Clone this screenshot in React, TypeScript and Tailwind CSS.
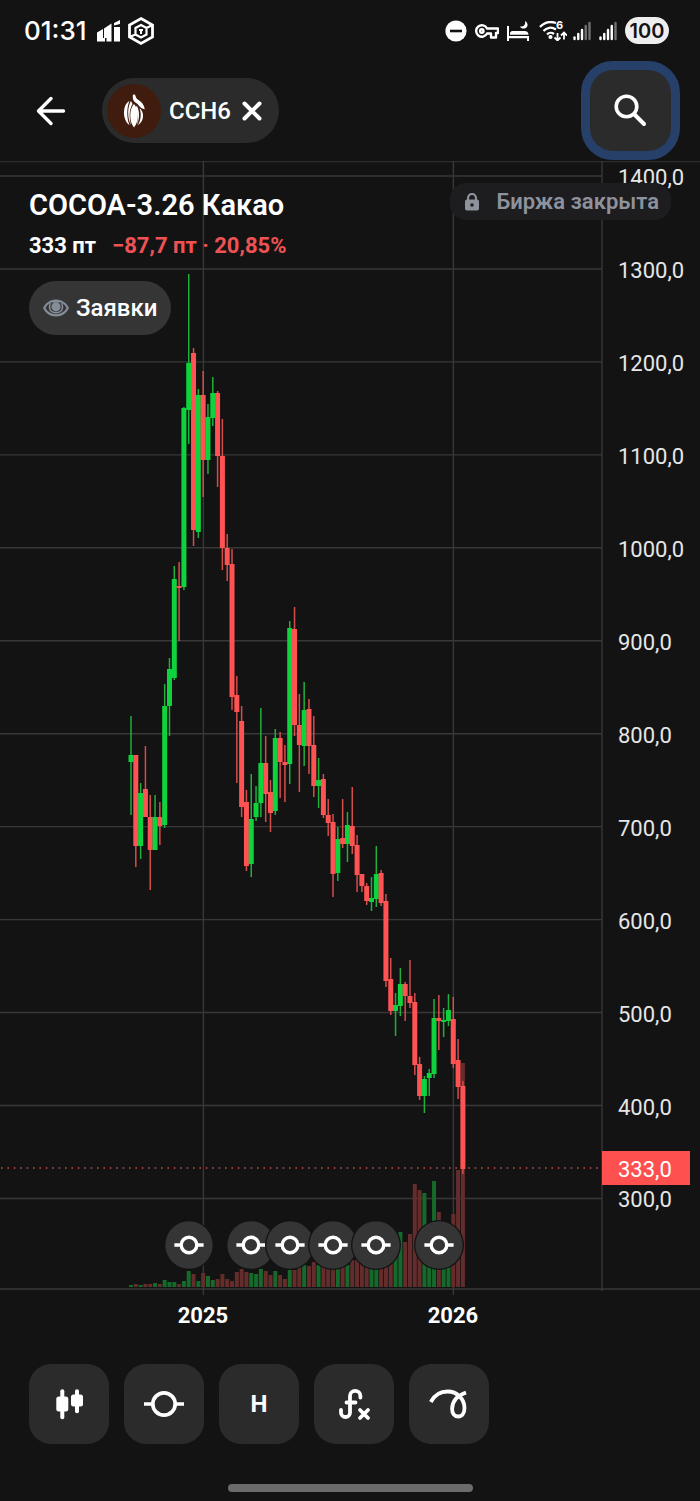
import type { ReactNode } from "react";

type Candle = [dir: "up" | "down", high: number, top: number, bottom: number, low: number, volume: number];

const FIRST_X = 131;
const STEP = 4.81;
const VOLUME_BASE = 1287;

// Weekly bars: direction, high, body top, body bottom, low, volume height
const candles: Candle[] = [
  ["up", 716, 755, 762, 815, 2],
  ["down", 755, 755, 846, 867, 3],
  ["up", 783, 793, 846, 859, 2],
  ["down", 746, 789, 817, 817, 3],
  ["down", 795, 817, 850, 890, 3],
  ["up", 795, 817, 850, 850, 4],
  ["down", 802, 817, 826, 845, 3],
  ["up", 684, 706, 825, 828, 7],
  ["up", 658, 669, 706, 736, 5],
  ["up", 566, 579, 678, 680, 5],
  ["down", 562, 586, 588, 641, 3],
  ["up", 407, 408, 587, 590, 6],
  ["up", 274, 363, 410, 444, 16],
  ["down", 348, 353, 530, 546, 13],
  ["up", 389, 395, 532, 538, 6],
  ["down", 371, 395, 460, 497, 14],
  ["up", 404, 417, 460, 474, 11],
  ["up", 377, 393, 418, 426, 7],
  ["down", 391, 393, 456, 487, 8],
  ["down", 419, 456, 548, 570, 13],
  ["down", 534, 548, 565, 581, 8],
  ["down", 549, 564, 697, 710, 6],
  ["down", 676, 695, 712, 783, 15],
  ["down", 706, 721, 807, 817, 18],
  ["down", 790, 802, 866, 871, 15],
  ["up", 774, 819, 864, 877, 14],
  ["up", 786, 803, 817, 821, 13],
  ["up", 708, 763, 803, 817, 18],
  ["down", 736, 763, 794, 822, 16],
  ["down", 780, 792, 813, 832, 12],
  ["up", 729, 738, 811, 815, 16],
  ["down", 732, 738, 762, 798, 12],
  ["down", 745, 762, 765, 802, 8],
  ["up", 621, 628, 764, 784, 17],
  ["down", 607, 629, 725, 736, 17],
  ["down", 694, 725, 745, 792, 21],
  ["up", 682, 710, 746, 766, 22],
  ["down", 699, 709, 746, 774, 21],
  ["down", 716, 745, 786, 797, 25],
  ["up", 758, 780, 786, 808, 22],
  ["down", 774, 779, 815, 818, 24],
  ["down", 799, 815, 823, 836, 24],
  ["down", 814, 822, 874, 897, 23],
  ["up", 827, 839, 873, 881, 24],
  ["down", 799, 838, 844, 848, 23],
  ["up", 812, 825, 844, 862, 22],
  ["down", 787, 826, 846, 854, 27],
  ["down", 835, 845, 875, 892, 27],
  ["down", 874, 874, 886, 892, 25],
  ["down", 883, 886, 901, 905, 25],
  ["up", 877, 898, 902, 911, 27],
  ["up", 846, 874, 899, 907, 27],
  ["down", 870, 873, 903, 906, 27],
  ["down", 894, 901, 981, 987, 27],
  ["down", 958, 979, 1011, 1015, 30],
  ["up", 993, 1005, 1011, 1036, 30],
  ["up", 968, 984, 1006, 1016, 55],
  ["down", 982, 984, 996, 1021, 45],
  ["down", 960, 996, 1003, 1008, 53],
  ["down", 993, 1002, 1065, 1075, 103],
  ["down", 1057, 1064, 1096, 1100, 97],
  ["up", 1076, 1079, 1096, 1113, 94],
  ["up", 1069, 1073, 1078, 1096, 60],
  ["up", 999, 1018, 1074, 1078, 106],
  ["down", 995, 1018, 1021, 1050, 75],
  ["up", 1008, 1020, 1022, 1037, 50],
  ["up", 994, 1010, 1021, 1026, 50],
  ["down", 997, 1019, 1064, 1068, 73],
  ["down", 1039, 1060, 1087, 1099, 117],
  ["down", 1081, 1086, 1169, 1174, 224],
];

const priceLabels = [
  "1400,0",
  "1300,0",
  "1200,0",
  "1100,0",
  "1000,0",
  "900,0",
  "800,0",
  "700,0",
  "600,0",
  "500,0",
  "400,0",
  "300,0",
];

const years = [
  { label: "2025", x: 203 },
  { label: "2026", x: 453 },
];

const events = [189, 251, 290, 333, 376, 439];

const gridY = (i: number) => 176 + i * 92.95;

const Chart = () => (
  <svg viewBox="0 161 700 1179" className="block h-auto w-full font-[Roboto,sans-serif]" role="img" aria-label="COCOA-3.26">
    <g stroke="#383838" strokeWidth="1.4">
      <line x1="0" x2="700" y1="161.6" y2="161.6" stroke="#2c2c2c" />
      {priceLabels.map((label, i) => (
        <line key={label} x1="0" x2="602" y1={gridY(i)} y2={gridY(i)} />
      ))}
      {years.map((year) => (
        <line key={year.label} x1={year.x + 0.4} x2={year.x + 0.4} y1="161" y2="1295" />
      ))}
      <line x1="602" x2="602" y1="161" y2="1291" />
      <line x1="0" x2="700" y1="1289" y2="1289" />
    </g>

    {candles.map(([dir, , , , , volume], i) => (
      <rect
        key={i}
        x={FIRST_X + i * STEP - 2}
        y={VOLUME_BASE - volume}
        width="4"
        height={volume}
        fill={dir === "up" ? "#15692a" : "#652c2c"}
      />
    ))}

    <line x1="1" x2="601" y1="1168" y2="1168" stroke="#c84a4a" strokeWidth="1.5" strokeDasharray="1.6 4.8" />

    {candles.map(([dir, high, top, bottom, low], i) => {
      const x = FIRST_X + i * STEP;
      const body = dir === "up" ? "#0fd33c" : "#ff5252";
      const wick = dir === "up" ? "#1fb03c" : "#d64d4d";
      return (
        <g key={i}>
          <line x1={x} x2={x} y1={high} y2={low} stroke={wick} strokeWidth="1.5" />
          <rect x={x - 2.5} y={top} width="5" height={bottom - top} fill={body} />
        </g>
      );
    })}

    {events.map((x) => (
      <g key={x} transform={`translate(${x} 1245)`}>
        <circle r="25" fill="#131313" />
        <circle r="23.7" fill="#353535" />
        <path d="M-14.6 0h7M7.6 0h7" stroke="#fff" strokeWidth="3.6" />
        <circle r="7.8" fill="none" stroke="#fff" strokeWidth="3.4" />
      </g>
    ))}

    <g fill="#e6e6e6" fontSize="22">
      {priceLabels.map((label, i) => (
        <text key={label} x="618" y={Math.round(gridY(i) + 9)}>
          {label}
        </text>
      ))}
    </g>
    <rect x="602" y="1151" width="88" height="34" fill="#ff5050" />
    <text x="618" y="1177" fontSize="22" fill="#fff">
      333,0
    </text>

    <g fill="#fff" fontSize="22" fontWeight="700" textAnchor="middle">
      {years.map((year) => (
        <text key={year.label} x={year.x} y="1323">
          {year.label}
        </text>
      ))}
    </g>
  </svg>
);

const SignalBars = ({ active }: { active: number }) => (
  <svg viewBox="0 0 18 20" className="h-5 w-[18px]" stroke="#fff" strokeWidth="2.4" strokeLinecap="round">
    {[16.5, 13, 9, 5, 2].map((y, i) => (
      <line key={y} x1={1.5 + i * 3.75} x2={1.5 + i * 3.75} y1={y} y2="18" opacity={i < active ? 1 : 0.4} />
    ))}
  </svg>
);

const StatusBar = () => (
  <div className="flex h-[61px] items-center justify-between pl-6 pr-[31px]">
    <div className="flex items-center">
      <span className="w-[73px] font-[Inter,sans-serif] text-[26px] font-medium leading-8">01:31</span>
      <svg viewBox="0 0 24 22" className="h-[22px] w-6" fill="#fff">
        <path d="M0 12.500l6-3.500v12.500H0zM7 8.500l7.500-5v18H9.500v-3.500H7zM6 18h2v3.500H6zM17 3l6-3v4l-6 1.500zM17 7h6v14.500h-6z" />
      </svg>
      <svg viewBox="0 0 28 30" className="ml-1.5 h-[30px] w-7" fill="none" stroke="#fff" strokeWidth="2.8">
        <path d="M14 2.500L25.500 9v12L14 27.500 2.500 21V9z" />
        <path d="M14 9l5.500 3v6.500L14 21.500l-5.500-3V12zM19.500 12l6-3M8.500 18.500l-6 2.500" strokeWidth="2.200" />
        <path d="M14 13v5M12 14h4" strokeWidth="2" />
      </svg>
    </div>
    <div className="flex items-center">
      <svg viewBox="0 0 22 22" className="size-[22px]">
        <circle cx="11" cy="11" r="10.6" fill="#fff" />
        <path d="M5 11h12" stroke="#131313" strokeWidth="2.6" />
      </svg>
      <svg viewBox="0 0 24 16" className="ml-2 h-4 w-6" fill="none" stroke="#fff" strokeWidth="2.4">
        <path d="M12 5.500h11v4.500h-2v4.500h-5v-4h-4A5.700 5.700 0 1 1 12 5.500z" strokeLinejoin="round" />
        <circle cx="6.800" cy="8" r="1.700" />
      </svg>
      <svg viewBox="0 0 22 20" className="ml-2 h-5 w-[22px]" fill="#fff">
        <path d="M0 5h2v10h20v5h-2v-2.800H2V20H0zM3 13.800v-1.300C3 11 4 10 5.500 10h12c2 0 4 1 4 3.800z" />
        <path d="M18 0c3.500 1.500 3.500 7-.5 7.500-2 .3-3.800-.4-4.500-2C16.500 6 19 3.500 18 0z" />
      </svg>
      <span className="relative ml-2.5 block h-5 w-7">
        <svg viewBox="0 0 28 20" className="h-5 w-7" fill="none" stroke="#fff" strokeWidth="2.2">
          <path d="M1 6C5 1.500 11 0 17 2M4.500 10c3-3.500 8-4.500 12.500-1.500M8 13.500c2-2 5-2 7-.5" />
          <circle cx="11.500" cy="16" r="1" fill="#fff" />
          <path d="M18.500 12v7M15.500 16.500l3 3 3-3M25 18.500v-7M22 14.500l3-3 3 3" strokeWidth="1.800" />
        </svg>
        <span className="absolute -top-1 left-[17px] font-[Inter,sans-serif] text-[11px] font-bold leading-4">6</span>
      </span>
      <span className="mx-1.5 flex gap-2">
        <SignalBars active={3} />
        <SignalBars active={4} />
      </span>
      <span className="ml-0.5 flex h-[27px] w-11 items-center justify-center rounded-full bg-[#eeeeee] font-[Inter,sans-serif] text-[20px] font-semibold leading-6 text-[#131313]">
        100
      </span>
    </div>
  </div>
);

const Header = () => (
  <header className="flex h-[100px] items-start justify-between pl-[31px] pr-5">
    <div className="flex items-center pt-[17px]">
      <button aria-label="Назад" className="size-10">
        <svg viewBox="0 0 40 40" fill="none" stroke="#fff" strokeWidth="3.4" strokeLinecap="round" strokeLinejoin="round">
          <path d="M32.500 20H7.500M20 7.500L7.500 20 20 32.500" />
        </svg>
      </button>
      <div className="ml-[31px] flex h-[65px] w-[177px] items-center rounded-full bg-[#2b2b2b] pl-[5px]">
        <span className="flex size-[54px] items-center justify-center rounded-full bg-[#401c0e]">
          <svg viewBox="0 0 40 40" className="size-10" fill="#fff">
            <path d="M20 13c-5 5-5 18 0 23.500 5-5.500 5-18.500 0-23.500z" />
            <path d="M15.500 10C8.500 13 8 29 15.500 34 12.500 28 12.500 16 15.500 10z" />
            <path d="M17 10c-3.500 5-4 17 0 24-2-8-2-15 1.500-21z" />
            <path d="M25.500 17c5 4 5 13-1.500 17 3-5 3.500-11 1.500-17z" />
            <path d="M23 15c3 6 2.500 13 0 19 1-6 1-12-1.500-18z" />
            <path d="M18.800 5c0-2 2.300-1.800 2.700 0 .5 2 1.500 3 3 4 3.500 2 5.500 5 6.300 9.300-2.500-.3-4.800-2-6.500-4.300-1-1.500-2-2-3.300-2.800C19 10 18.800 7.500 18.800 5z" />
          </svg>
        </span>
        <span className="ml-2 text-2xl font-medium">CCH6</span>
        <button aria-label="Закрыть" className="ml-[9px] size-6">
          <svg viewBox="0 0 24 24" stroke="#fff" strokeWidth="4" strokeLinecap="round">
            <path d="M4.500 4.500l15 15M19.500 4.500l-15 15" />
          </svg>
        </button>
      </div>
    </div>
    <button
      aria-label="Поиск"
      className="flex size-[99px] items-center justify-center rounded-[32px] border-[9px] border-[#26406a] bg-[#2b2b2b]"
    >
      <svg viewBox="0 0 40 40" className="size-10" fill="none" stroke="#fff" strokeWidth="3.600" strokeLinecap="round">
        <circle cx="15.500" cy="15.500" r="10.300" />
        <path d="M24 24l9 9" strokeWidth="4" />
      </svg>
    </button>
  </header>
);

const Instrument = () => (
  <div className="absolute left-[29px] top-6 flex flex-col items-start">
    <h1 className="text-[29px] font-semibold leading-10">COCOA-3.26 Какао</h1>
    <p className="mt-[5px] flex gap-4 text-[22px] font-bold leading-8">
      <span>333 пт</span>
      <span className="text-[#ee5253]">−87,7 пт · 20,85%</span>
    </p>
    <button className="mt-[19px] flex h-[54px] items-center gap-[7px] rounded-full bg-[#353535] px-3.5 text-2xl font-medium">
      <svg viewBox="0 0 26 18" className="h-[18px] w-[26px]">
        <path d="M13 .5c6 0 10.500 3.500 13 8.500-2.500 5-7 8.500-13 8.500S2.500 14 0 9C2.500 4 7 .5 13 .5z" fill="#858d99" />
        <path d="M7.500 3.500C5 5 3.500 7 2.500 9c2.300 4 6 6.200 10.500 6.200S21.200 13 23.500 9c-1-2-2.500-4-5-5.500" fill="#353535" />
        <path d="M7.500 3.500C5 9 7 13.500 13 13.800c6-.3 8-4.800 5.500-10.300" fill="none" stroke="#858d99" strokeWidth="1.400" />
        <circle cx="13" cy="7.800" r="4.600" fill="#858d99" />
      </svg>
      Заявки
    </button>
  </div>
);

const MarketStatus = () => (
  <div className="absolute right-[29px] top-[22px] flex h-[37px] items-center rounded-[16px] bg-[#1d1d1f] pl-[15px] pr-3 text-[22px] font-semibold text-[#8e929d]">
    <svg viewBox="0 0 14 18" className="mr-[18px] h-[18px] w-3.5">
      <path d="M3 8V5a4 4 0 0 1 8 0v3" fill="none" stroke="#8e929d" strokeWidth="2.200" />
      <rect y="6.500" width="14" height="11" rx="2" fill="#8e929d" />
      <circle cx="7" cy="12" r="1.800" fill="#1d1d1f" />
    </svg>
    Биржа закрыта
  </div>
);

const ToolButton = ({ label, children }: { label: string; children: ReactNode }) => (
  <button aria-label={label} className="flex size-20 items-center justify-center rounded-[22px] bg-[#2b2b2b] text-2xl font-bold">
    {children}
  </button>
);

const Toolbar = () => (
  <nav className="flex gap-[15px] px-[29px] pt-6">
    <ToolButton label="Свечи">
      <svg viewBox="0 0 40 40" className="size-10" fill="#fff">
        <rect x="11.300" y="5.300" width="4" height="30" rx="2" />
        <rect x="7.300" y="12.600" width="12" height="15" rx="2.500" />
        <rect x="26" y="5.300" width="4" height="24" rx="2" />
        <rect x="22" y="10.600" width="12" height="12" rx="2.500" />
      </svg>
    </ToolButton>
    <ToolButton label="События">
      <svg viewBox="0 0 40 40" className="size-10" fill="none" stroke="#fff" strokeWidth="3.700">
        <circle cx="20" cy="20" r="11.200" />
        <path d="M0 20h8.500M31.500 20H40" />
      </svg>
    </ToolButton>
    <ToolButton label="Интервал H">H</ToolButton>
    <ToolButton label="Индикаторы">
      <svg viewBox="0 0 40 40" className="size-10" fill="none" stroke="#fff" strokeWidth="3.800" strokeLinecap="round">
        <path d="M7 26v2.500a4.500 4.500 0 0 0 9 0V12a5.200 5.200 0 0 1 10.400 0v1.500M12.500 18.500h9" />
        <path d="M26 26l8 8M34 26l-8 8" />
      </svg>
    </ToolButton>
    <ToolButton label="Рисование">
      <svg viewBox="0 0 40 40" className="size-10" fill="none" stroke="#fff" strokeWidth="3.800">
        <path d="M1.800 18C5.500 11 12 7.500 18.700 7.500 28 7.500 35.500 15 35.500 24c0 5-2.500 8.500-6.200 8.500-3.800 0-6.200-3-6.200-7.500C23.100 17 28.500 11.500 37 8.500" />
      </svg>
    </ToolButton>
  </nav>
);

const App = () => {
  return (
    <div className="flex min-h-screen flex-col bg-[#131313] font-[Roboto,sans-serif] text-white">
      <StatusBar />
      <Header />
      <main className="relative">
        <Chart />
        <Instrument />
        <MarketStatus />
      </main>
      <Toolbar />
      <div className="mx-auto mt-10 mb-[9px] h-2 w-[35%] rounded-full bg-[#6b6b6b]" />
    </div>
  );
};

export default App;
